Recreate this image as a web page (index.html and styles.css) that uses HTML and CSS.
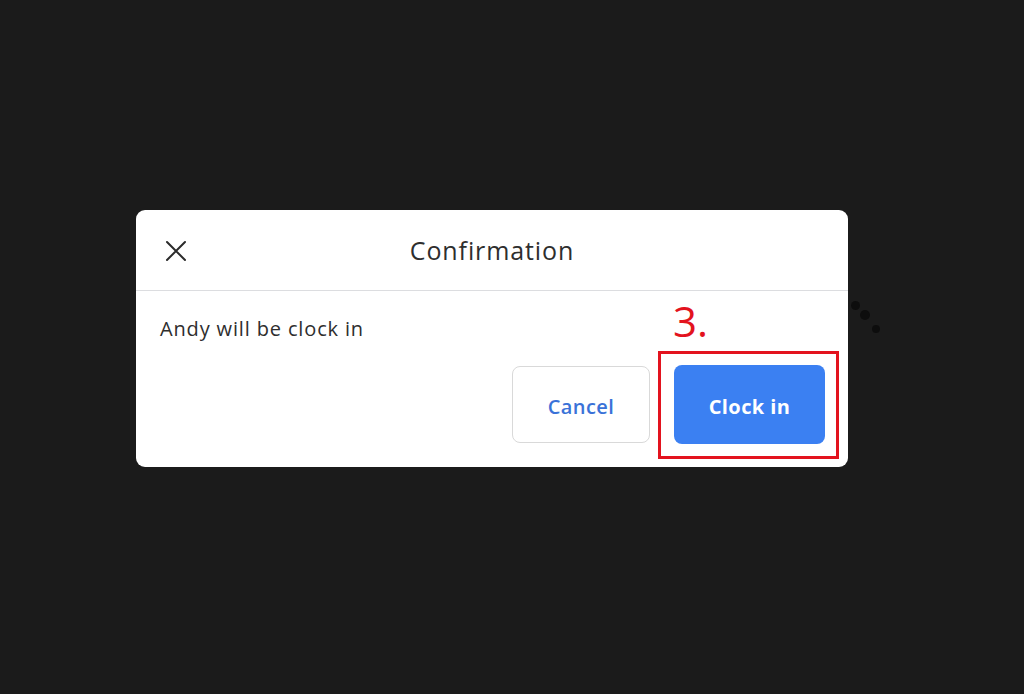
FILE: index.html
```html
<!DOCTYPE html>
<html>
<head>
<meta charset="utf-8">
<link rel="stylesheet" href="styles.css">
</head>
<body>
  <div class="dialog">
    <div class="header">
      <button class="close" aria-label="Close">
        <svg width="22" height="22" viewBox="0 0 22 22"><path d="M2 2 L20 20 M20 2 L2 20" stroke="#2b2b2b" stroke-width="2" fill="none" stroke-linecap="round"/></svg>
      </button>
      <div class="title">Confirmation</div>
    </div>
    <div class="content">
      <p class="message">Andy will be clock in</p>
      <div class="actions">
        <button class="btn btn-cancel">Cancel</button>
        <div class="highlight-wrap">
          <span class="step">3.</span>
          <button class="btn btn-primary">Clock in</button>
          <span class="highlight"></span>
        </div>
      </div>
    </div>
    <div class="dots"><span class="d1"></span><span class="d2"></span><span class="d3"></span></div>
  </div>
</body>
</html>
```
FILE: styles.css
```css
html, body {
  margin: 0;
  height: 100%;
}
body {
  background: #1b1b1b;
  font-family: "Open Sans", "Noto Sans", sans-serif;
  padding: 210px 0 0 136px;
  box-sizing: border-box;
}
.dialog {
  position: relative;
  width: 712px;
  height: 257px;
  background: #fff;
  border-radius: 9px;
  display: flex;
  flex-direction: column;
}
.header {
  position: relative;
  height: 80px;
  border-bottom: 1px solid #dcdde0;
  display: flex;
  align-items: center;
  justify-content: center;
}
.close {
  position: absolute;
  left: 29px;
  top: 30px;
  background: none;
  border: 0;
  padding: 0;
  width: 22px;
  height: 22px;
  display: flex;
}
.title {
  font-size: 25px;
  color: #2e2e2e;
  letter-spacing: 0.9px;
  margin-top: -1px;
}
.content {
  flex: 1;
  display: flex;
  flex-direction: column;
  padding: 0 23px 23px 24px;
}
.message {
  margin: 25px 0 0 0;
  font-size: 20px;
  line-height: 26px;
  letter-spacing: 0.85px;
  color: #2e2e2e;
}
.actions {
  margin-top: auto;
  display: flex;
  justify-content: flex-end;
  gap: 24px;
  align-items: flex-end;
}
.btn {
  font-family: "Open Sans", "Noto Sans", sans-serif;
  font-size: 20px;
  font-weight: 600;
  letter-spacing: 0.4px;
  border-radius: 8px;
  cursor: pointer;
  padding: 4px 0 0 0;
}
.btn-cancel {
  width: 138px;
  height: 77px;
  margin-bottom: 1px;
  background: #fff;
  border: 1px solid #d9d9d9;
  color: #3a72d8;
}
.btn-primary {
  width: 151px;
  height: 79px;
  background: #3b80f2;
  border: 0;
  color: #fff;
  font-weight: 700;
}
.highlight-wrap {
  position: relative;
  display: flex;
}
.highlight {
  position: absolute;
  left: -16px;
  right: -14px;
  top: -14px;
  bottom: -15px;
  border: 3px solid #e3131e;
  pointer-events: none;
}
.step {
  position: absolute;
  left: -1px;
  top: -66px;
  font-size: 42px;
  line-height: 44px;
  color: #e3131e;
}
.dots span {
  position: absolute;
  border-radius: 50%;
  background: #0d0d0d;
}
.dots .d1 { left: 715px; top: 91px; width: 9px; height: 9px; }
.dots .d2 { left: 724px; top: 100px; width: 10px; height: 10px; }
.dots .d3 { left: 736px; top: 115px; width: 8px; height: 8px; }
```
